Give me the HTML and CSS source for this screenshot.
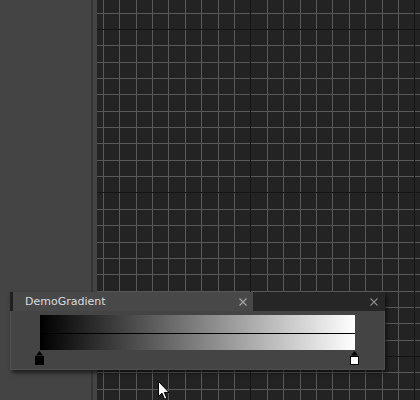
FILE: index.html
```html
<!DOCTYPE html>
<html>
<head>
<meta charset="utf-8">
<link rel="stylesheet" href="styles.css">
</head>
<body>
<div class="app">
  <div class="sidepanel"></div>
  <div class="divider"></div>
  <div class="gutter"></div>
  <div class="canvas">
    <svg class="grid" width="323" height="400" viewBox="0 0 323 400">
      <g fill="#595959">
        <rect x="6" y="0" width="1" height="400"/>
        <rect x="22" y="0" width="1" height="400"/>
        <rect x="39" y="0" width="1" height="400"/>
        <rect x="55" y="0" width="1" height="400"/>
        <rect x="71" y="0" width="1" height="400"/>
        <rect x="88" y="0" width="1" height="400"/>
        <rect x="104" y="0" width="1" height="400"/>
        <rect x="121" y="0" width="1" height="400"/>
        <rect x="137" y="0" width="1" height="400"/>
        <rect x="170" y="0" width="1" height="400"/>
        <rect x="186" y="0" width="1" height="400"/>
        <rect x="203" y="0" width="1" height="400"/>
        <rect x="219" y="0" width="1" height="400"/>
        <rect x="235" y="0" width="1" height="400"/>
        <rect x="252" y="0" width="1" height="400"/>
        <rect x="268" y="0" width="1" height="400"/>
        <rect x="285" y="0" width="1" height="400"/>
        <rect x="301" y="0" width="1" height="400"/>
        <rect x="0" y="13" width="323" height="1"/>
        <rect x="0" y="45" width="323" height="1"/>
        <rect x="0" y="62" width="323" height="1"/>
        <rect x="0" y="78" width="323" height="1"/>
        <rect x="0" y="94" width="323" height="1"/>
        <rect x="0" y="111" width="323" height="1"/>
        <rect x="0" y="127" width="323" height="1"/>
        <rect x="0" y="143" width="323" height="1"/>
        <rect x="0" y="160" width="323" height="1"/>
        <rect x="0" y="176" width="323" height="1"/>
        <rect x="0" y="209" width="323" height="1"/>
        <rect x="0" y="225" width="323" height="1"/>
        <rect x="0" y="242" width="323" height="1"/>
        <rect x="0" y="258" width="323" height="1"/>
        <rect x="0" y="274" width="323" height="1"/>
        <rect x="0" y="291" width="323" height="1"/>
        <rect x="0" y="307" width="323" height="1"/>
        <rect x="0" y="323" width="323" height="1"/>
        <rect x="0" y="340" width="323" height="1"/>
        <rect x="0" y="372" width="323" height="1"/>
        <rect x="0" y="389" width="323" height="1"/>
      </g>
      <g fill="#141414">
        <rect x="153" y="0" width="1" height="400"/>
        <rect x="317" y="0" width="1" height="400"/>
        <rect x="0" y="29" width="323" height="1"/>
        <rect x="0" y="192" width="323" height="1"/>
        <rect x="0" y="356" width="323" height="1"/>
      </g>
    </svg>
  </div>
</div>

<div class="window">
  <div class="titlebar">
    <div class="tab">
      <span class="tab-title">DemoGradient</span>
      <svg class="close" width="8" height="8" viewBox="0 0 8 8"><path d="M0.5 0.5 L7.5 7.5 M7.5 0.5 L0.5 7.5" stroke="#a8a8a8" stroke-width="1.1" fill="none"/></svg>
    </div>
    <div class="titlebar-rest">
      <svg class="close" width="8" height="8" viewBox="0 0 8 8"><path d="M0.5 0.5 L7.5 7.5 M7.5 0.5 L0.5 7.5" stroke="#8a8a8a" stroke-width="1.1" fill="none"/></svg>
    </div>
  </div>
  <div class="body">
    <div class="editor">
      <div class="gradient"><div class="midline"></div></div>
      <div class="stops">
        <svg class="stop" style="left:0%" width="9" height="14" viewBox="0 0 9 14">
          <path d="M4.5 0 L8 4.5 L1 4.5 Z" fill="#000"/>
          <rect x="0.5" y="5.5" width="8" height="8" fill="#000" stroke="#000"/>
        </svg>
        <svg class="stop" style="left:100%" width="9" height="14" viewBox="0 0 9 14">
          <path d="M4.5 0 L8 4.5 L1 4.5 Z" fill="#000"/>
          <rect x="0.5" y="5.5" width="8" height="8" fill="#fff" stroke="#000"/>
        </svg>
      </div>
    </div>
  </div>
</div>

<svg class="cursor" width="13" height="20" viewBox="0 0 13 20">
  <path d="M0.5 0.5 L0.5 15.5 L4 12.2 L6.6 18.2 L8.8 17.2 L6.3 11.4 L11 11.4 Z" fill="#fff" stroke="#000" stroke-width="1" stroke-linejoin="miter"/>
</svg>
</body>
</html>
```

FILE: styles.css
```css
html, body {
  margin: 0;
  padding: 0;
  width: 420px;
  height: 400px;
  overflow: hidden;
  background: #232323;
  font-family: "DejaVu Sans", sans-serif;
}

.app {
  display: flex;
  width: 420px;
  height: 400px;
}

.sidepanel {
  width: 91px;
  background: #444444;
}

.divider {
  width: 2px;
  background: #353535;
}

.gutter {
  width: 4px;
  background: #444444;
}

.canvas {
  flex: 1;
  background: #232323;
  overflow: hidden;
}

.grid {
  display: block;
}

.window {
  position: absolute;
  left: 10px;
  top: 292px;
  width: 375px;
  height: 78px;
  box-sizing: border-box;
  border: 1px solid #4e4e4e;
  border-top: none;
  background: #444444;
  box-shadow: 2px 3px 4px rgba(0, 0, 0, 0.55);
  display: flex;
  flex-direction: column;
}

.titlebar {
  display: flex;
  height: 19px;
  margin: 0 -1px 0 -1px;
  background: #262626;
}

.tab {
  width: 240px;
  border-left: 3px solid #1f1f1f;
  background: #484848;
  display: flex;
  align-items: center;
  justify-content: space-between;
  padding: 0 6px 0 12px;
  box-sizing: content-box;
  width: 222px;
}

.tab-title {
  color: #dcdcdc;
  font-size: 11px;
  line-height: 19px;
}

.close {
  display: block;
}

.titlebar-rest {
  flex: 1;
  display: flex;
  align-items: center;
  justify-content: flex-end;
  padding-right: 7px;
}

.body {
  flex: 1;
  padding: 4px 0 0 29px;
}

.editor {
  width: 315px;
  display: flex;
  flex-direction: column;
}

.gradient {
  height: 35px;
  background: linear-gradient(to right, #000000, #ffffff);
  display: flex;
  align-items: center;
}

.midline {
  width: 100%;
  height: 1px;
  background: #000;
  margin-top: 1px;
}

.stops {
  position: relative;
  height: 15px;
  margin: 1px 0 0 0;
}

.stop {
  position: absolute;
  top: 0;
  margin-left: -5px;
  display: block;
}

.cursor {
  position: absolute;
  left: 158px;
  top: 381px;
}
```
